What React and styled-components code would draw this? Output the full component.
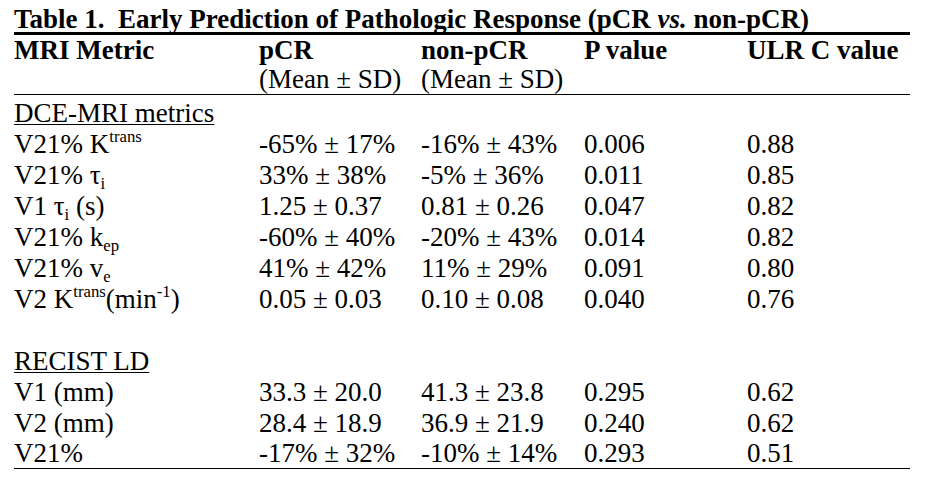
import React from 'react';
import styled, { createGlobalStyle } from 'styled-components';

const GlobalStyle = createGlobalStyle`
  body {
    margin: 0;
    background: #fff;
  }
`;

const Page = styled.div`
  width: 934px;
  height: 486px;
  background: #fff;
  color: #000;
  font-family: "Liberation Serif", "Times New Roman", serif;
  font-size: 27px;
  overflow: hidden;
`;

const Table = styled.div`
  margin-left: 14px;
  width: 896px;
`;

const Caption = styled.div`
  font-weight: bold;
  line-height: 25px;
  padding-top: 7px;
  border-bottom: 3px solid #000;
  white-space: pre;
`;

const Row = styled.div`
  display: grid;
  grid-template-columns: 245px 162px 163px 163px 1fr;
  line-height: ${p => p.$h || 31}px;
  padding-top: ${p => p.$pt || 0}px;
  font-weight: ${p => (p.$bold ? 'bold' : 'normal')};
  border-bottom: ${p => (p.$rule ? '1px solid #000' : 'none')};
  white-space: nowrap;
`;

const Cell = styled.div``;

const Section = styled.span`
  text-decoration: underline;
  text-underline-offset: 2px;
  text-decoration-thickness: 1px;
`;

const Sub = styled.sub`
  font-size: 0.62em;
  line-height: 0;
  vertical-align: -0.28em;
`;

const Sup = styled.sup`
  font-size: 0.62em;
  line-height: 0;
  vertical-align: 0.66em;
`;

const dce = [
  [<>V21% K<Sup>trans</Sup></>, '-65% ± 17%', '-16% ± 43%', '0.006', '0.88'],
  [<>V21% τ<Sub>i</Sub></>, '33% ± 38%', '-5% ± 36%', '0.011', '0.85'],
  [<>V1 τ<Sub>i</Sub> (s)</>, '1.25 ± 0.37', '0.81 ± 0.26', '0.047', '0.82'],
  [<>V21% k<Sub>ep</Sub></>, '-60% ± 40%', '-20% ± 43%', '0.014', '0.82'],
  [<>V21% v<Sub>e</Sub></>, '41% ± 42%', '11% ± 29%', '0.091', '0.80'],
  [<>V2 K<Sup>trans</Sup>(min<Sup>-1</Sup>)</>, '0.05 ± 0.03', '0.10 ± 0.08', '0.040', '0.76'],
];

const recist = [
  ['V1 (mm)', '33.3 ± 20.0', '41.3 ± 23.8', '0.295', '0.62'],
  ['V2 (mm)', '28.4 ± 18.9', '36.9 ± 21.9', '0.240', '0.62'],
  ['V21%', '-17% ± 32%', '-10% ± 14%', '0.293', '0.51'],
];

const DataRow = ({ cells, last }) => (
  <Row $rule={last} $h={last ? 29 : 31}>
    {cells.map((c, i) => (
      <Cell key={i}>{c}</Cell>
    ))}
  </Row>
);

const App = () => {
  return (
    <Page>
      <GlobalStyle />
      <Table>
        <Caption>
          Table 1.  Early Prediction of Pathologic Response (pCR <i>vs.</i> non-pCR)
        </Caption>
        <Row $bold $h={30}>
          <Cell>MRI Metric</Cell>
          <Cell>pCR</Cell>
          <Cell>non-pCR</Cell>
          <Cell>P value</Cell>
          <Cell>ULR C value</Cell>
        </Row>
        <Row $h={29} $rule>
          <Cell />
          <Cell>(Mean ± SD)</Cell>
          <Cell>(Mean ± SD)</Cell>
          <Cell />
          <Cell />
        </Row>
        <Row $pt={3}>
          <Cell><Section>DCE-MRI metrics</Section></Cell>
        </Row>
        {dce.map((r, i) => (
          <DataRow key={i} cells={r} />
        ))}
        <Row>
          <Cell>&nbsp;</Cell>
        </Row>
        <Row>
          <Cell><Section>RECIST LD</Section></Cell>
        </Row>
        {recist.map((r, i) => (
          <DataRow key={i} cells={r} last={i === recist.length - 1} />
        ))}
      </Table>
    </Page>
  );
};

export default App;
